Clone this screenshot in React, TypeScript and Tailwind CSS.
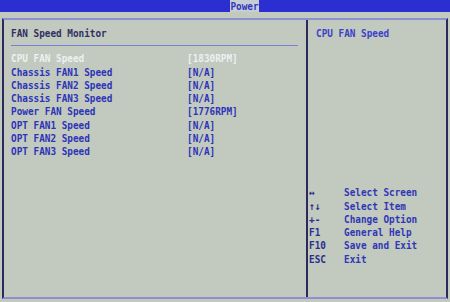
const rows = [
  { label: 'CPU FAN Speed', value: '[1830RPM]', active: true },
  { label: 'Chassis FAN1 Speed', value: '[N/A]' },
  { label: 'Chassis FAN2 Speed', value: '[N/A]' },
  { label: 'Chassis FAN3 Speed', value: '[N/A]' },
  { label: 'Power FAN Speed', value: '[1776RPM]' },
  { label: 'OPT FAN1 Speed', value: '[N/A]' },
  { label: 'OPT FAN2 Speed', value: '[N/A]' },
  { label: 'OPT FAN3 Speed', value: '[N/A]' },
];

const help = [
  { key: '↔', text: 'Select Screen' },
  { key: '↑↓', text: 'Select Item' },
  { key: '+-', text: 'Change Option' },
  { key: 'F1', text: 'General Help' },
  { key: 'F10', text: 'Save and Exit' },
  { key: 'ESC', text: 'Exit' },
];

export default function App() {
  return (
    <div
      className="w-[450px] h-[302px] bg-[#c2c9bf] flex flex-col overflow-hidden font-bold text-[9.35px] leading-[13.3px]"
      style={{ fontFamily: '"DejaVu Sans Mono", "Liberation Mono", monospace' }}
    >
      {/* top menu bar */}
      <div className="h-[12px] bg-[#2b2fd2] flex shrink-0">
        <div className="w-[230px]" />
        <div className="w-[29px] h-[12px] bg-[#c6cdd3] text-[#3038c0] flex items-center justify-center leading-none">
          <span className="scale-y-120">Power</span>
        </div>
      </div>

      <div className="h-[6px] shrink-0" />

      {/* main frame */}
      <div className="ml-[2px] w-[446px] h-[281px] flex border-t-2 border-b-2 border-x-2 border-t-[#8a90d0] border-b-[#8a90d0] border-x-[#2a2a5c]">
        <div className="w-[302px] flex flex-col pl-[7px] pt-[6px]">
          <div className="text-[#2e3062] scale-y-115 origin-left">FAN Speed Monitor</div>
          <div className="mt-[6px] w-[287px] h-[1px] bg-[#7880d8]" />
          <div className="mt-[5px] flex flex-col">
            {rows.map((r) => (
              <div
                key={r.label}
                className={`flex scale-y-115 ${r.active ? 'text-[#eef0f2]' : 'text-[#2c34b8]'}`}
              >
                <div className="w-[176px]">{r.label}</div>
                <div>{r.value}</div>
              </div>
            ))}
          </div>
        </div>

        <div className="w-[2px] bg-[#2a2a5c]" />

        <div className="flex-1 flex flex-col pt-[6px]">
          <div className="pl-[8px] text-[#3a42c8] scale-y-115">CPU FAN Speed</div>
          <div className="mt-[146px] flex flex-col pl-[1px]">
            {help.map((h) => (
              <div key={h.key} className="flex text-[#2f37b6] scale-y-115">
                <div className="w-[35px] text-[#2a2f90]">{h.key}</div>
                <div>{h.text}</div>
              </div>
            ))}
          </div>
        </div>
      </div>
    </div>
  );
}
